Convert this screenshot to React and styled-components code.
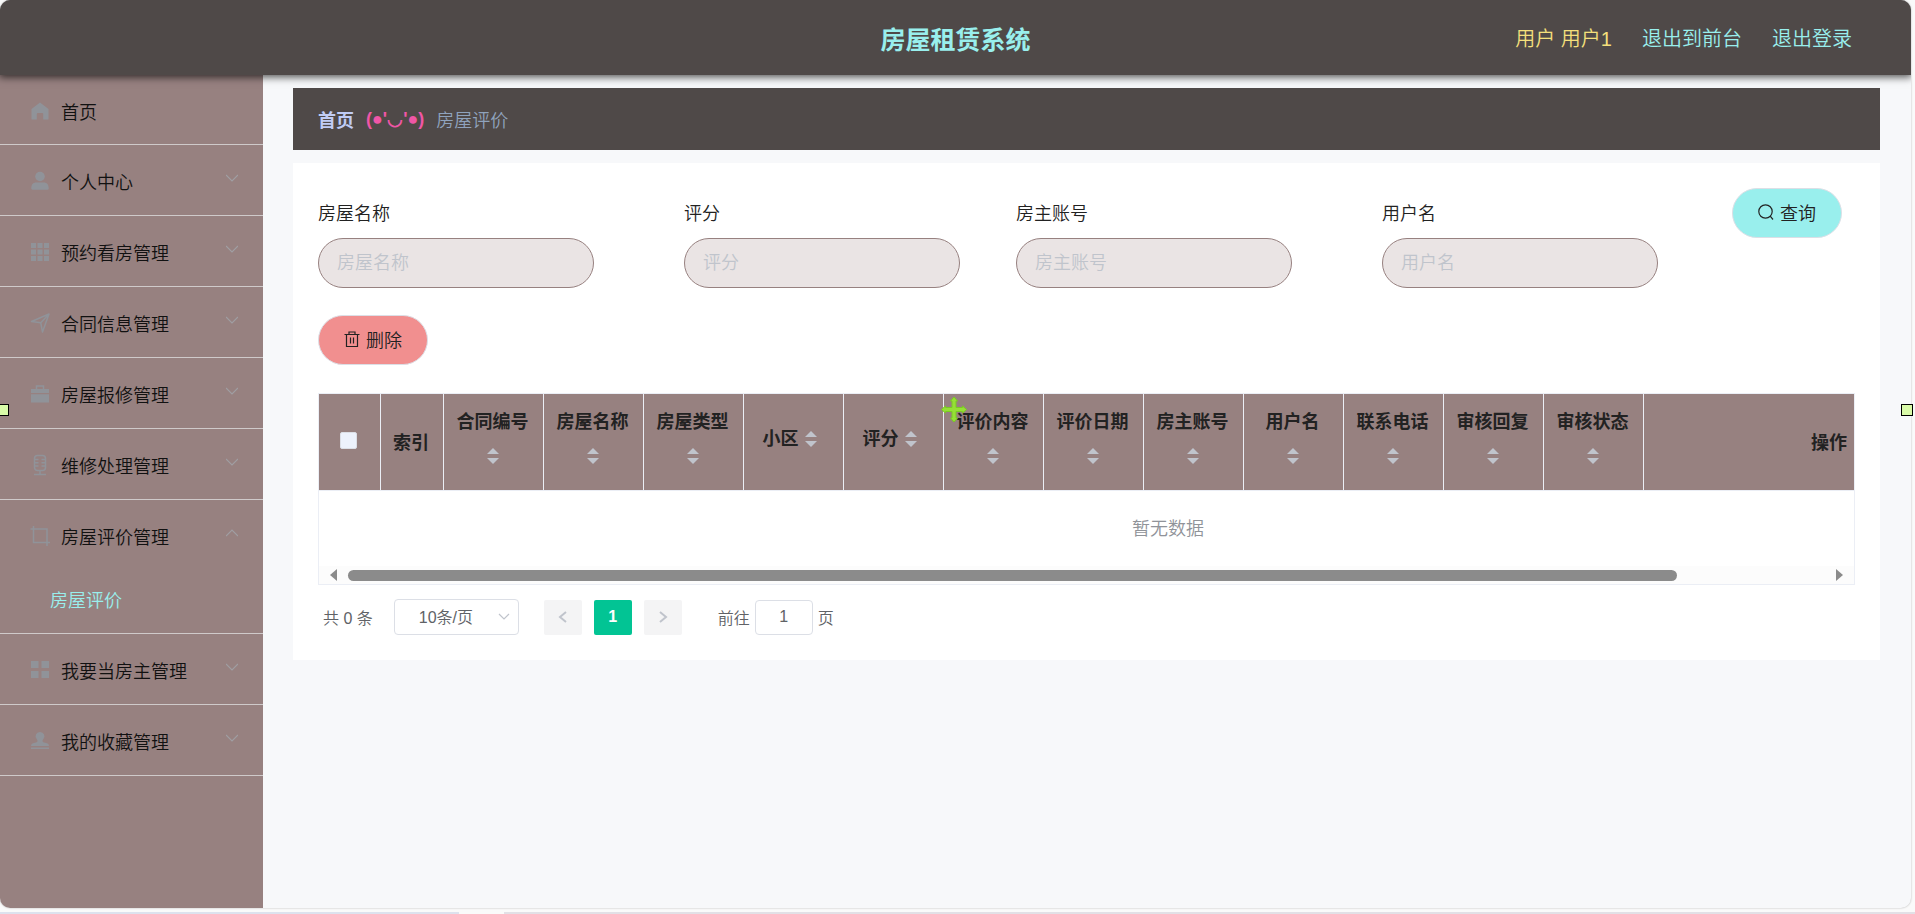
import React from "react";
import styled, { createGlobalStyle, css } from "styled-components";

const menu = [
  { label: "首页", icon: "home", first: true },
  { label: "个人中心", icon: "user", arrow: true },
  { label: "预约看房管理", icon: "grid", arrow: true },
  { label: "合同信息管理", icon: "position", arrow: true },
  { label: "房屋报修管理", icon: "suitcase", arrow: true },
  { label: "维修处理管理", icon: "mic", arrow: true },
  { label: "房屋评价管理", icon: "crop", arrow: true, children: ["房屋评价"] },
  { label: "我要当房主管理", icon: "menu", arrow: true },
  { label: "我的收藏管理", icon: "custom", arrow: true },
];

const filters = [
  { id: "fangwumingcheng", label: "房屋名称" },
  { id: "pingfen", label: "评分" },
  { id: "fangzhuzhanghao", label: "房主账号" },
  { id: "yonghuming", label: "用户名" },
];

const columns = [
  "合同编号",
  "房屋名称",
  "房屋类型",
  "小区",
  "评分",
  "评价内容",
  "评价日期",
  "房主账号",
  "用户名",
  "联系电话",
  "审核回复",
  "审核状态",
];

const MenuIcon = ({ name }) => (
  <IconSvg viewBox="0 0 18 18" aria-hidden="true">
    {name === "home" && (
      <path d="M9 0.5 17.5 7V17a.5.5 0 0 1-.5.5h-4.800V12a1 1 0 0 0-1-1H6.800a1 1 0 0 0-1 1v5.500H1a.5.5 0 0 1-.5-.5V7Z" />
    )}
    {name === "user" && (
      <>
        <ellipse cx="9" cy="4.500" rx="4.800" ry="4.700" />
        <path d="M.3 16.500c0-4 1.700-6 5-6h7.400c3.300 0 5 2 5 6 0 .8-.5 1.200-1.200 1.200h-15c-.8 0-1.200-.4-1.200-1.200Z" />
      </>
    )}
    {name === "grid" &&
      [0, 6.5, 13].map((y) =>
        [0, 6.5, 13].map((x) => (
          <rect key={x + "-" + y} x={x} y={y} width="5" height="5" />
        ))
      )}
    {name === "position" && (
      <path
        className="line"
        d="M18 0 11.500 18 9.800 8.800.5 7.500ZM18 0 9.800 8.800"
        strokeLinejoin="round"
      />
    )}
    {name === "suitcase" && (
      <>
        <path className="line" d="M5.500 4V1h7v3" />
        <path d="M0 4h18v4H0zM0 9.200h18V17.500H0z" />
      </>
    )}
    {name === "mic" && (
      <>
        <rect className="line" x="3.500" y="-.5" width="11" height="15" rx="3" />
        <path
          className="line"
          d="M4 3.500h3.500M4 6.800h3.500M4 10h3.500M14 3.500h-3.500M14 6.800h-3.500M14 10h-3.500M9 14.500v3.500M3 18.500h12"
        />
      </>
    )}
    {name === "crop" && (
      <path className="line" d="M-.5 2h16.500V19M2.500-1v16.500H19" />
    )}
    {name === "menu" && (
      <path d="M0 0h7.500v7H0zM10.500 0H18v7h-7.500zM0 10h7.500v7H0zM10.500 10H18v7h-7.500z" />
    )}
    {name === "custom" && (
      <path d="M9 0a4.300 4.300 0 0 1 3.200 7.300c-1 1.200-1.200 2.700.8 3.200 3 .6 5 1.200 5 3.500H0c0-2.300 2-2.900 5-3.500 2-.5 1.800-2 .8-3.200A4.300 4.300 0 0 1 9 0ZM0 15.500h18V17H0z" />
    )}
  </IconSvg>
);

const Chevron = ({ points, size = 12, width = 1.2 }) => (
  <svg width={size} height={size} viewBox="0 0 12 12" aria-hidden="true">
    <polyline
      points={points}
      fill="none"
      stroke="currentColor"
      strokeWidth={width}
    />
  </svg>
);

const App = () => {
  return (
    <>
      <GlobalStyle />
      <Page>
        <Header>
          <Title>房屋租赁系统</Title>
          <HeaderNav>
            <UserName>用户 用户1</UserName>
            <HeaderLink href="#front">退出到前台</HeaderLink>
            <HeaderLink href="#logout">退出登录</HeaderLink>
          </HeaderNav>
        </Header>
        <Body>
          <Sidebar>
            {menu.map((item) => (
              <MenuGroup key={item.label}>
                <MenuItem type="button" $first={item.first}>
                  <MenuIcon name={item.icon} />
                  <span>{item.label}</span>
                  {item.arrow && (
                    <Arrow>
                      <Chevron
                        points={item.children ? "0,9 6,3 12,9" : "0,3 6,9 12,3"}
                      />
                    </Arrow>
                  )}
                </MenuItem>
                {item.children &&
                  item.children.map((child) => (
                    <SubLink key={child} href="#pingjia">
                      {child}
                    </SubLink>
                  ))}
              </MenuGroup>
            ))}
          </Sidebar>
          <Main>
            <Breadcrumb>
              <CrumbLink href="#home">首页</CrumbLink>
              <Face>(●'◡'●)</Face>
              <span>房屋评价</span>
            </Breadcrumb>
            <Card>
              <SearchForm onSubmit={(e) => e.preventDefault()}>
                {filters.map((field) => (
                  <Field key={field.id}>
                    <label htmlFor={field.id}>{field.label}</label>
                    <input id={field.id} type="text" placeholder={field.label} />
                  </Field>
                ))}
                <PillButton type="submit" $color="#99efed">
                  <svg width="16" height="16" viewBox="0 0 16 16">
                    <circle cx="7.5" cy="7.500" r="6.700" />
                    <path d="M12.200 12.200 15 15.500" />
                  </svg>
                  查询
                </PillButton>
              </SearchForm>
              <PillButton type="button" $color="#f18f8f">
                <svg width="16" height="16" viewBox="0 0 16 16">
                  <path d="M.5 3.500h15M5 3.500v-2.500h6v2.500M2.500 3.500v12h11v-12M6.500 6.500v6M9.500 6.500v6" />
                </svg>
                删除
              </PillButton>
              <TableBox>
                <TableScroll>
                  <Table>
                    <colgroup>
                      <col style={{ width: 62 }} />
                      <col style={{ width: 63 }} />
                      {columns.map((name) => (
                        <col key={name} style={{ width: 100 }} />
                      ))}
                      <col />
                    </colgroup>
                    <thead>
                      <tr>
                        <th>
                          <Checkbox type="checkbox" aria-label="全选" />
                        </th>
                        <th>索引</th>
                        {columns.map((name) => (
                          <th key={name}>
                            <SortLabel>
                              {name}
                              <Carets />
                            </SortLabel>
                          </th>
                        ))}
                        <th>操作</th>
                      </tr>
                    </thead>
                    <tbody>
                      <tr>
                        <td colSpan={columns.length + 3}>暂无数据</td>
                      </tr>
                    </tbody>
                  </Table>
                </TableScroll>
                <ScrollBar>
                  <ScrollArrow />
                  <Track>
                    <Thumb />
                  </Track>
                  <ScrollArrow $right />
                </ScrollBar>
              </TableBox>
              <Pagination>
                <span>共 0 条</span>
                <SizeSelect>
                  <select aria-label="每页条数" defaultValue="10">
                    <option value="10">10条/页</option>
                    <option value="20">20条/页</option>
                    <option value="50">50条/页</option>
                  </select>
                  <SelectArrow>
                    <Chevron points="1,3 6,8 11,3" />
                  </SelectArrow>
                </SizeSelect>
                <Pager>
                  <PageButton type="button" disabled aria-label="上一页">
                    <Chevron points="9,1 3,6 9,11" width={2} />
                  </PageButton>
                  <PageButton type="button" $active>
                    1
                  </PageButton>
                  <PageButton type="button" disabled aria-label="下一页">
                    <Chevron points="3,1 9,6 3,11" width={2} />
                  </PageButton>
                </Pager>
                <Jump>
                  前往
                  <input type="text" defaultValue="1" />
                  页
                </Jump>
              </Pagination>
            </Card>
          </Main>
        </Body>
      </Page>
      <BottomStrip />
      <Handle $side="left" />
      <Handle $side="right" />
      <MoveCursor viewBox="0 0 26 26" aria-hidden="true">
        <path d="M13 .5 16.500 4.500H15V11h6.500V9.500L25.500 13l-4 3.500V15H15v6.500h1.500L13 25.500 9.500 21.500H11V15H4.500v1.500L.5 13l4-3.500V11H11V4.500H9.500Z" />
      </MoveCursor>
    </>
  );
};

const GlobalStyle = createGlobalStyle`
  * {
    box-sizing: border-box;
  }
  body {
    margin: 0;
    height: 100vh;
    overflow: hidden;
    background: #fafafa;
    color: #222;
    font-family: "Liberation Sans", "Noto Sans CJK SC", sans-serif;
    font-size: 18px;
    font-weight: 350;
  }
  #root {
    height: 100%;
    display: flex;
    flex-direction: column;
  }
  button, input, select {
    font: inherit;
    color: inherit;
  }
`;

const Page = styled.div`
  flex: 1;
  display: flex;
  flex-direction: column;
  margin: 0 4px 4px 0;
  overflow: hidden;
  border-radius: 10px;
  background: #f7f8fa;
  box-shadow: 0 0 2px rgba(0, 0, 0, 0.3);
`;

//Header
const Header = styled.header`
  position: relative;
  z-index: 1;
  height: 75px;
  display: grid;
  grid-template-columns: 1fr auto 1fr;
  align-items: center;
  padding: 0 59px;
  background: #4f4948;
  box-shadow: 0 1px 8px 1px rgba(0, 0, 0, 0.7);
`;

const Title = styled.h1`
  grid-column: 2;
  margin: 0;
  color: #99efed;
  font-size: 25px;
  font-weight: 700;
`;

const HeaderNav = styled.nav`
  display: flex;
  justify-content: flex-end;
  gap: 30px;
  font-size: 20px;
`;

const UserName = styled.span`
  color: #f5e07c;
`;

const HeaderLink = styled.a`
  color: #99efed;
  text-decoration: none;
`;

const Body = styled.div`
  flex: 1;
  display: flex;
`;

//Sidebar
const Sidebar = styled.aside`
  flex: 0 0 263px;
  background: #978180;
`;

const MenuGroup = styled.div`
  border-bottom: 1px solid #cfcaca;
`;

const MenuItem = styled.button`
  display: flex;
  align-items: center;
  gap: 12px;
  width: 100%;
  height: ${(props) => (props.$first ? 69 : 70)}px;
  padding: 2px 25px 0 31px;
  border: 0;
  background: none;
  color: #111;
  cursor: pointer;
`;

const IconSvg = styled.svg`
  width: 18px;
  height: 18px;
  overflow: visible;
  fill: #909399;
  .line {
    fill: none;
    stroke: #909399;
    stroke-width: 1.5;
  }
`;

const Arrow = styled.span`
  display: flex;
  margin-left: auto;
  padding-bottom: 6px;
  color: #a09ea2;
`;

const SubLink = styled.a`
  display: block;
  height: 63px;
  padding-left: 50px;
  line-height: 62px;
  color: #99efed;
  text-decoration: none;
`;

//Main area
const Main = styled.main`
  flex: 1;
  min-width: 0;
  padding: 13px 31px 0 30px;
`;

const Breadcrumb = styled.nav`
  display: flex;
  align-items: center;
  gap: 12px;
  height: 62px;
  margin-bottom: 13px;
  padding: 0 25px;
  background: #4f4948;
  color: #8fa3bd;
`;

const CrumbLink = styled.a`
  color: #c0ccf5;
  font-weight: 700;
  text-decoration: none;
`;

const Face = styled.span`
  color: #f056a6;
  font-weight: 700;
`;

const Card = styled.section`
  padding: 25px;
  background: #fff;
`;

const SearchForm = styled.form`
  display: grid;
  grid-template-columns: 366fr 332fr 366fr 350fr 123fr;
  align-items: start;
  margin-bottom: 27px;
`;

const Field = styled.div`
  display: flex;
  flex-direction: column;
  label {
    height: 50px;
    line-height: 52px;
  }
  input {
    width: 276px;
    height: 50px;
    padding: 0 18px;
    border: 1px solid #978180;
    border-radius: 25px;
    background: #eae4e4;
    outline: none;
  }
  input::placeholder {
    color: #c0c4cc;
  }
`;

const PillButton = styled.button`
  justify-self: start;
  display: flex;
  align-items: center;
  gap: 6px;
  height: 50px;
  padding: 0 25px 3px;
  border: 1px solid #dcdfe6;
  border-radius: 25px;
  background: ${(props) => props.$color};
  color: #222;
  cursor: pointer;
  svg {
    fill: none;
    stroke: currentColor;
    stroke-width: 1.2;
  }
`;

//Table
const TableBox = styled.div`
  margin-top: 28px;
  border: 1px solid #ebeef5;
`;

const TableScroll = styled.div`
  overflow: hidden;
`;

const Table = styled.table`
  width: 1698px;
  table-layout: fixed;
  border-collapse: separate;
  border-spacing: 0;
  text-align: center;
  th {
    height: 97px;
    padding: 0 13px 3px 11px;
    border-right: 1px solid #ebeef5;
    border-bottom: 1px solid #ebeef5;
    background: #978180;
    color: #222;
    font-weight: 700;
    white-space: nowrap;
  }
  td {
    height: 75px;
    padding: 0 0 3px;
    color: #909399;
  }
`;

const SortLabel = styled.div`
  display: flex;
  flex-wrap: wrap;
  align-items: flex-start;
  justify-content: center;
  line-height: 34px;
`;

const Carets = styled.span`
  display: flex;
  flex-direction: column;
  align-items: center;
  gap: 4px;
  width: 24px;
  height: 38px;
  padding-top: 9px;
  &::before,
  &::after {
    content: "";
    border: 6px solid transparent;
  }
  &::before {
    border-top: 0;
    border-bottom-color: #c0c4cc;
  }
  &::after {
    border-bottom: 0;
    border-top-color: #c0c4cc;
  }
`;

const Checkbox = styled.input`
  appearance: none;
  display: block;
  width: 17px;
  height: 17px;
  margin: 0 auto;
  border: 1px solid #dcdfe6;
  border-radius: 2px;
  background: #edf2fc;
`;

const ScrollBar = styled.div`
  display: flex;
  align-items: center;
  gap: 11px;
  height: 18px;
  padding: 0 11px;
  background: #fcfcfc;
`;

const ScrollArrow = styled.span`
  border: 6px solid transparent;
  ${(props) =>
    props.$right
      ? css`
          border-right: 0;
          border-left: 7px solid #8b8b8b;
        `
      : css`
          border-left: 0;
          border-right: 7px solid #8b8b8b;
        `}
`;

const Track = styled.div`
  flex: 1;
`;

const Thumb = styled.div`
  width: 90%;
  height: 11px;
  border-radius: 6px;
  background: #8b8b8b;
`;

//Pagination
const Pagination = styled.div`
  display: flex;
  align-items: center;
  margin-top: 14px;
  padding-left: 5px;
  color: #606266;
  font-size: 16px;
`;

const SizeSelect = styled.div`
  position: relative;
  margin-left: 21px;
  select {
    appearance: none;
    display: block;
    width: 125px;
    height: 36px;
    padding: 0 20px 0 24px;
    border: 1px solid #dcdfe6;
    border-radius: 4px;
    background: #fff;
  }
`;

const SelectArrow = styled.span`
  position: absolute;
  top: 12px;
  right: 9px;
  display: flex;
  color: #c0c4cc;
  pointer-events: none;
`;

const Pager = styled.div`
  display: flex;
  gap: 12px;
  margin-left: 25px;
`;

const PageButton = styled.button`
  display: flex;
  align-items: center;
  justify-content: center;
  width: 38px;
  height: 35px;
  padding: 0;
  border: 0;
  border-radius: 2px;
  background: ${(props) => (props.$active ? "#02c494" : "#f4f4f5")};
  color: ${(props) => (props.$active ? "#fff" : "#c0c4cc")};
  font-weight: 700;
`;

const Jump = styled.label`
  display: flex;
  align-items: center;
  gap: 5px;
  margin-left: 36px;
  input {
    width: 58px;
    height: 35px;
    padding: 0 3px;
    border: 1px solid #dcdfe6;
    border-radius: 4px;
    background: #fff;
    text-align: center;
  }
`;

const BottomStrip = styled.div`
  height: 2px;
  background: linear-gradient(
    to right,
    #dde2ee 0 459px,
    #fafafa 459px 504px,
    #e2e0e6 504px
  );
`;

//Selection marks that float over the page
const Handle = styled.span`
  position: absolute;
  z-index: 2;
  top: 404px;
  ${(props) => (props.$side === "left" ? "left: -3px;" : "right: 2px;")}
  width: 12px;
  height: 12px;
  border: 1px solid #000;
  background: #d9fba8;
`;

const MoveCursor = styled.svg`
  position: absolute;
  z-index: 2;
  top: 396px;
  left: 941px;
  width: 26px;
  height: 27px;
  fill: #95e036;
  stroke: #7acb22;
`;

export default App;
